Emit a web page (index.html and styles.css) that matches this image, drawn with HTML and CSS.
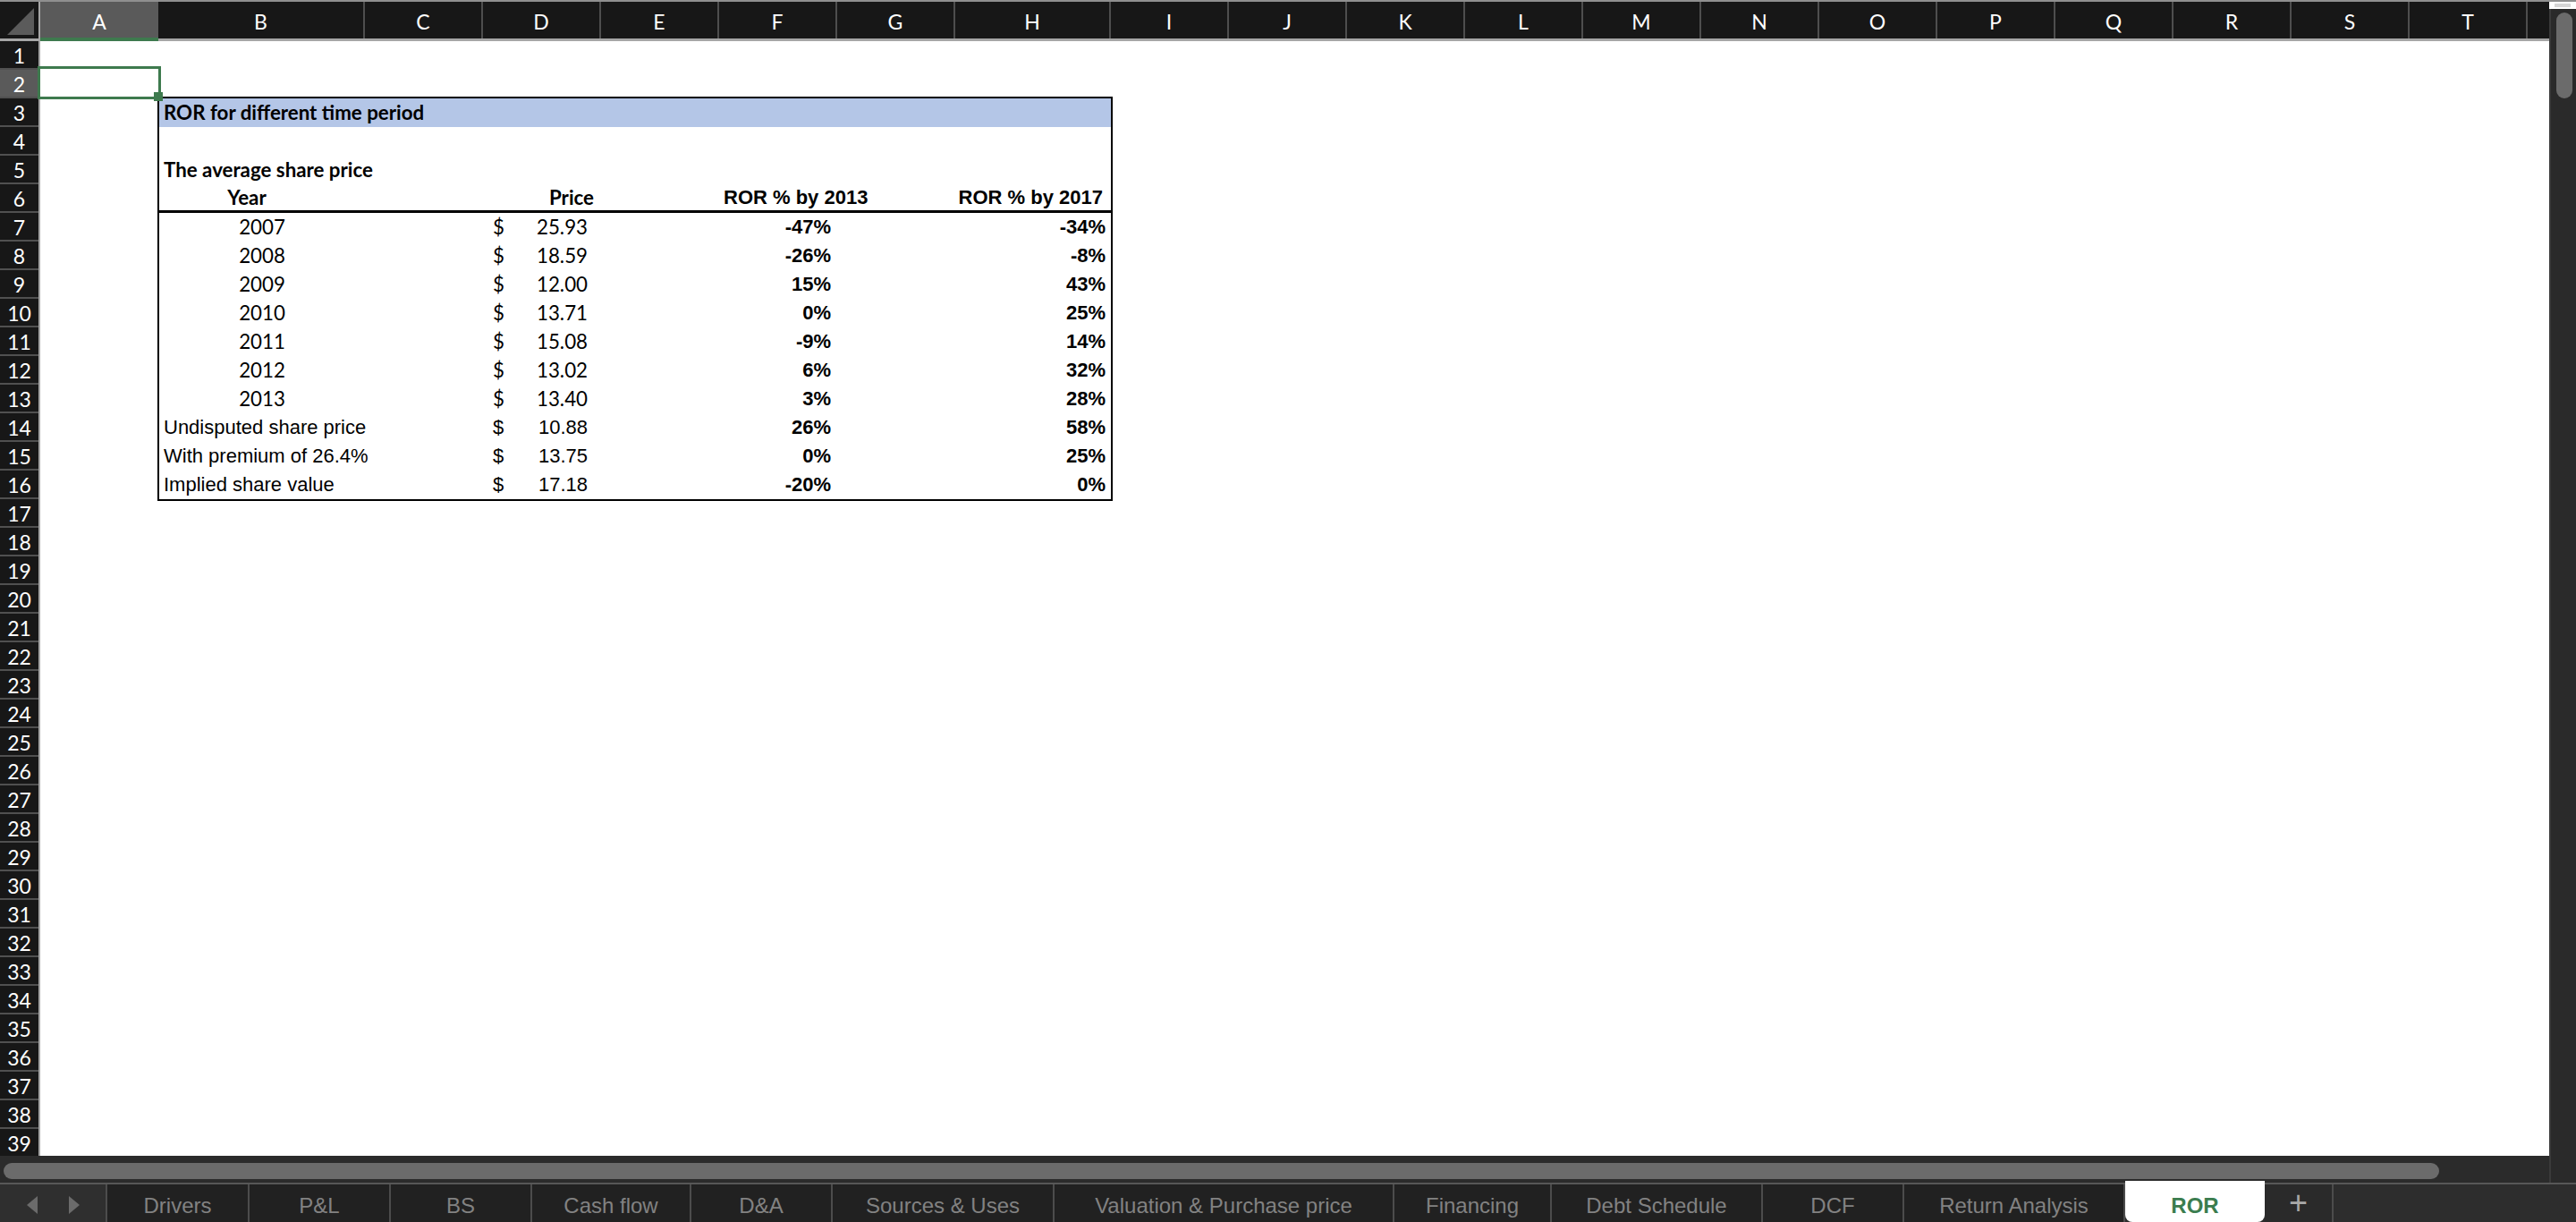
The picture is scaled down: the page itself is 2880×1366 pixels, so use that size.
FILE: index.html
```html
<!DOCTYPE html>
<html>
<head>
<meta charset="utf-8">
<link rel="stylesheet" href="styles.css">
</head>
<body>
<div class="app">
  <div class="top">
    <div class="sheet">
      <div class="colhead">
        <div class="corner"><svg width="30" height="30" viewBox="0 0 30 30"><polygon points="30,0 30,30 0,30" fill="#5b5b5b"/></svg></div>
        <div class="ch w132 sel">A</div>
        <div class="ch w231">B</div>
        <div class="ch w132">C</div>
        <div class="ch w132">D</div>
        <div class="ch w132">E</div>
        <div class="ch w132">F</div>
        <div class="ch w132">G</div>
        <div class="ch w174">H</div>
        <div class="ch w132">I</div>
        <div class="ch w132">J</div>
        <div class="ch w132">K</div>
        <div class="ch w132">L</div>
        <div class="ch w132">M</div>
        <div class="ch w132">N</div>
        <div class="ch w132">O</div>
        <div class="ch w132">P</div>
        <div class="ch w132">Q</div>
        <div class="ch w132">R</div>
        <div class="ch w132">S</div>
        <div class="ch w132">T</div>
        <div class="ch wrest"></div>
      </div>
      <div class="grid">
        <div class="rowhead">
          <div class="rh">1</div><div class="rh sel">2</div><div class="rh">3</div><div class="rh">4</div><div class="rh">5</div>
          <div class="rh">6</div><div class="rh">7</div><div class="rh">8</div><div class="rh">9</div><div class="rh">10</div>
          <div class="rh">11</div><div class="rh">12</div><div class="rh">13</div><div class="rh">14</div><div class="rh">15</div>
          <div class="rh">16</div><div class="rh">17</div><div class="rh">18</div><div class="rh">19</div><div class="rh">20</div>
          <div class="rh">21</div><div class="rh">22</div><div class="rh">23</div><div class="rh">24</div><div class="rh">25</div>
          <div class="rh">26</div><div class="rh">27</div><div class="rh">28</div><div class="rh">29</div><div class="rh">30</div>
          <div class="rh">31</div><div class="rh">32</div><div class="rh">33</div><div class="rh">34</div><div class="rh">35</div>
          <div class="rh">36</div><div class="rh">37</div><div class="rh">38</div><div class="rh">39</div>
        </div>
        <div class="cells">
          <div class="selbox"><span class="handle"></span></div>
          <div class="tbl">
            <div class="tr title"><div class="c cal b span">ROR for different time period</div></div>
            <div class="tr"></div>
            <div class="tr"><div class="c cal b span">The average share price</div></div>
            <div class="tr hdr">
              <div class="c cal b ctr yearhd">Year</div>
              <div class="c"></div>
              <div class="c cal b r pricehd">Price</div>
              <div class="c"></div>
              <div class="c ari b ror13hd">ROR % by 2013</div>
              <div class="c"></div>
              <div class="c ari b r ror17hd">ROR % by 2017</div>
            </div>
            <div class="tr"><div class="c cal ctr">2007</div><div class="c"></div><div class="c cal price"><span>$</span><span>25.93</span></div><div class="c"></div><div class="c ari b r v13">-47%</div><div class="c"></div><div class="c ari b r v17">-34%</div></div>
            <div class="tr"><div class="c cal ctr">2008</div><div class="c"></div><div class="c cal price"><span>$</span><span>18.59</span></div><div class="c"></div><div class="c ari b r v13">-26%</div><div class="c"></div><div class="c ari b r v17">-8%</div></div>
            <div class="tr"><div class="c cal ctr">2009</div><div class="c"></div><div class="c cal price"><span>$</span><span>12.00</span></div><div class="c"></div><div class="c ari b r v13">15%</div><div class="c"></div><div class="c ari b r v17">43%</div></div>
            <div class="tr"><div class="c cal ctr">2010</div><div class="c"></div><div class="c cal price"><span>$</span><span>13.71</span></div><div class="c"></div><div class="c ari b r v13">0%</div><div class="c"></div><div class="c ari b r v17">25%</div></div>
            <div class="tr"><div class="c cal ctr">2011</div><div class="c"></div><div class="c cal price"><span>$</span><span>15.08</span></div><div class="c"></div><div class="c ari b r v13">-9%</div><div class="c"></div><div class="c ari b r v17">14%</div></div>
            <div class="tr"><div class="c cal ctr">2012</div><div class="c"></div><div class="c cal price"><span>$</span><span>13.02</span></div><div class="c"></div><div class="c ari b r v13">6%</div><div class="c"></div><div class="c ari b r v17">32%</div></div>
            <div class="tr"><div class="c cal ctr">2013</div><div class="c"></div><div class="c cal price"><span>$</span><span>13.40</span></div><div class="c"></div><div class="c ari b r v13">3%</div><div class="c"></div><div class="c ari b r v17">28%</div></div>
            <div class="tr"><div class="c ari lbl">Undisputed share price</div><div class="c"></div><div class="c ari price"><span>$</span><span>10.88</span></div><div class="c"></div><div class="c ari b r v13">26%</div><div class="c"></div><div class="c ari b r v17">58%</div></div>
            <div class="tr"><div class="c ari lbl">With premium of 26.4%</div><div class="c"></div><div class="c ari price"><span>$</span><span>13.75</span></div><div class="c"></div><div class="c ari b r v13">0%</div><div class="c"></div><div class="c ari b r v17">25%</div></div>
            <div class="tr"><div class="c ari lbl">Implied share value</div><div class="c"></div><div class="c ari price"><span>$</span><span>17.18</span></div><div class="c"></div><div class="c ari b r v13">-20%</div><div class="c"></div><div class="c ari b r v17">0%</div></div>
          </div>
        </div>
      </div>
      <div class="hscroll"><div class="hthumb"></div></div>
    </div>
    <div class="vscroll">
      <div class="vtop"><span class="vgrip"></span></div>
      <div class="vtrack"><div class="vthumb"></div></div>
    </div>
  </div>
  <div class="tabs">
    <div class="nav">
      <svg width="14" height="20" viewBox="0 0 14 20"><polygon points="13,0 13,20 1,10" fill="#6b6b6b"/></svg>
      <svg width="14" height="20" viewBox="0 0 14 20"><polygon points="1,0 1,20 13,10" fill="#6b6b6b"/></svg>
    </div>
    <div class="tab t159">Drivers</div>
    <div class="tab t158">P&amp;L</div>
    <div class="tab t158">BS</div>
    <div class="tab t178">Cash flow</div>
    <div class="tab t158">D&amp;A</div>
    <div class="tab t248">Sources &amp; Uses</div>
    <div class="tab t380">Valuation &amp; Purchase price</div>
    <div class="tab t176">Financing</div>
    <div class="tab t236">Debt Schedule</div>
    <div class="tab t158">DCF</div>
    <div class="tab t247">Return Analysis</div>
    <div class="tab active t156">ROR</div>
    <div class="tab plus">+</div>
    <div class="tabrest"></div>
  </div>
</div>
</body>
</html>
```
FILE: styles.css
```css
* { box-sizing: border-box; }
html, body { margin: 0; padding: 0; }
body {
  width: 2880px;
  height: 1366px;
  overflow: hidden;
  background: #2b2b2b;
  font-family: Lato, "Open Sans", sans-serif;
}
.app { display: flex; flex-direction: column; width: 2880px; height: 1366px; }
.top { display: flex; height: 1322px; }
.sheet { width: 2850px; display: flex; flex-direction: column; }

/* column header */
.colhead {
  display: flex;
  height: 46px;
  background: #171717;
  border-top: 2px solid #8f8f8f;
  border-bottom: 3px solid #a6a6a6;
}
.corner {
  width: 45px;
  flex: none;
  border-right: 2px solid #a6a6a6;
  display: flex;
  align-items: flex-end;
  justify-content: flex-end;
  padding: 0 5px 4px 0;
}
.ch {
  flex: none;
  height: 100%;
  border-right: 2px solid #4e4e4e;
  color: #fff;
  font-size: 23px;
  display: flex;
  align-items: center;
  justify-content: center;
  padding-top: 3px;
  position: relative;
}
.ch.sel { background: #5a5a5a; border-right: none; }
.ch.sel::after {
  content: "";
  position: absolute;
  left: 0; right: 0; bottom: -3px;
  height: 4px;
  background: #3e7a4e;
}
.w132 { width: 132px; }
.w231 { width: 231px; }
.w174 { width: 174px; }
.wrest { width: 24px; border-right: none; }

/* grid */
.grid { display: flex; height: 1246px; overflow: hidden; background: #fff; }
.rowhead {
  width: 45px;
  flex: none;
  background: #171717;
  border-right: 2px solid #a6a6a6;
}
.rh {
  height: 32px;
  border-bottom: 2px solid #505050;
  color: #fff;
  font-size: 23px;
  display: flex;
  align-items: center;
  justify-content: center;
  padding-top: 2px;
}
.rh.sel { background: #5a5a5a; }
.cells { flex: 1; position: relative; }

.selbox {
  position: absolute;
  left: -3px;
  top: 28px;
  width: 138px;
  height: 37px;
  border: 3px solid #3e7a4e;
  z-index: 2;
}
.handle {
  position: absolute;
  right: -5px;
  bottom: -5px;
  width: 10px;
  height: 10px;
  background: #3e7a4e;
}

/* table */
.tbl {
  width: 1068px;
  margin: 62px 0 0 131px;
  border: 2px solid #000;
  color: #000;
}
.tr {
  display: grid;
  grid-template-columns: 230px 132px 132px 132px 132px 132px 174px;
  height: 32px;
}
.tr.title { background: #b4c6e7; }
.tr.hdr { border-bottom: 3px solid #000; }
.c {
  white-space: nowrap;
  line-height: 32px;
  font-size: 22px;
  overflow: visible;
}
.tr.hdr .c { line-height: 30px; }
.span { grid-column: 1 / -1; padding-left: 5px; }
.cal { font-family: Lato, "Open Sans", sans-serif; font-size: 22.3px; }
.ari { font-family: "Liberation Sans", Arial, sans-serif; font-size: 22px; }
.b { font-weight: bold; }
.r { text-align: right; }
.ctr { text-align: center; }
.yearhd { padding-right: 34px; }
.pricehd { padding-right: 8px; }
.ror13hd { padding-left: 5px; }
.ror17hd { padding-right: 9px; }
.v13 { padding-right: 7px; }
.v17 { padding-right: 6px; }
.lbl { padding-left: 5px; }
.price { display: flex; justify-content: space-between; padding: 0 15px 0 11px; }

/* horizontal scrollbar */
.hscroll { height: 30px; background: #2b2b2b; padding: 8px 0 0 4px; }
.hthumb { width: 2723px; height: 18px; border-radius: 9px; background: #6b6b6b; }

/* vertical scrollbar */
.vscroll {
  width: 30px;
  flex: none;
  display: flex;
  flex-direction: column;
  background: #2a2a2a;
}
.vtop {
  height: 10px;
  background: #fff;
  border-top: 2px solid #8f8f8f;
  display: flex;
  justify-content: center;
  align-items: center;
}
.vgrip { width: 18px; height: 4px; background: #d6d6d6; }
.vtrack {
  flex: 1;
  border-left: 2px solid #3a3a3a;
  padding: 4px 0 0 6px;
}
.vthumb { width: 18px; height: 96px; border-radius: 9px; background: #6b6b6b; }

/* tabs */
.tabs {
  display: flex;
  height: 44px;
  border-top: 2px solid #575757;
  background: #2d2d2d;
}
.nav {
  width: 120px;
  flex: none;
  background: #2f2f2f;
  border-right: 2px solid #4c4c4c;
  display: flex;
  align-items: center;
  padding: 4px 0 0 29px;
  gap: 33px;
}
.tab {
  flex: none;
  height: 42px;
  background: #212121;
  border-right: 2px solid #4c4c4c;
  color: #828282;
  font-family: "Liberation Sans", Arial, sans-serif;
  font-size: 24px;
  display: flex;
  align-items: center;
  justify-content: center;
  padding-top: 5px;
}
.t159 { width: 159px; }
.t158 { width: 158px; }
.t178 { width: 178px; }
.t248 { width: 248px; }
.t380 { width: 380px; }
.t176 { width: 176px; }
.t236 { width: 236px; }
.t247 { width: 247px; }
.t156 { width: 156px; }
.tab.active {
  background: #fff;
  color: #3b7d4f;
  font-weight: bold;
  height: 46px;
  margin-top: -4px;
  border-right: none;
  border-radius: 0 0 8px 8px;
  padding-top: 9px;
}
.tab.plus {
  width: 77px;
  background: #2a2a2a;
  color: #a8a8a8;
  font-size: 36px;
  padding-top: 0;
}
.tabrest { flex: 1; background: #2d2d2d; }
```
